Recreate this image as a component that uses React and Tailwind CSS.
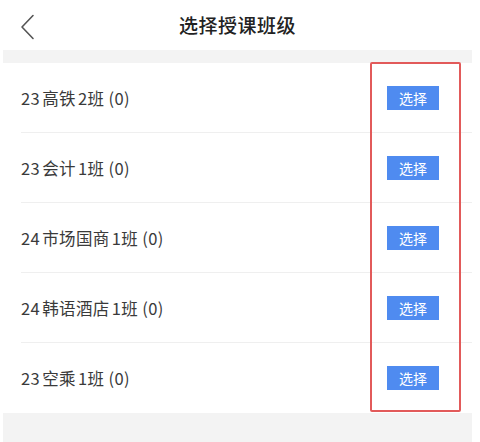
const classes = [
  { grade: '23', name: '高铁', no: '2' },
  { grade: '23', name: '会计', no: '1' },
  { grade: '24', name: '市场国商', no: '1' },
  { grade: '24', name: '韩语酒店', no: '1' },
  { grade: '23', name: '空乘', no: '1' },
];

function ClassRow({ item, last }) {
  return (
    <div className="relative flex h-[70px] items-center justify-between pl-[18px] pr-[33px]">
      <span className="text-[16.5px] text-[#3a3a3a] tracking-[0.4px]">
        {item.grade}
        <span className="ml-[2px]">{item.name}</span>
        <span className="ml-[2px]">{item.no}</span>班 (0)
      </span>
      <button
        type="button"
        className="flex h-[24px] w-[52px] items-center justify-center bg-[#4f8bf0] text-[14px] text-white"
      >
        选择
      </button>
      {!last && <div className="absolute bottom-0 left-[18px] right-0 h-px bg-[#efefef]" />}
    </div>
  );
}

export default function App() {
  return (
    <div
      className="h-[442px] w-[480px] overflow-hidden bg-white"
      style={{ fontFamily: '"Noto Sans CJK SC", "Noto Sans", sans-serif' }}
    >
      <div className="ml-[3px] w-[469px] relative">
        <header className="relative flex h-[50px] items-center justify-center">
          <svg
            className="absolute left-[16px] top-[14px]"
            width="18"
            height="26"
            viewBox="0 0 18 26"
            fill="none"
            stroke="#555"
            strokeWidth="1.6"
            strokeLinecap="round"
            strokeLinejoin="round"
          >
            <path d="M14 1.5 L3 13 L14 24.5" />
          </svg>
          <h1 className="text-[19px] font-medium text-[#222] tracking-[0.5px]">选择授课班级</h1>
        </header>
        <div className="h-[13px] bg-[#f3f3f3]" />
        <div>
          {classes.map((c, i) => (
            <ClassRow key={i} item={c} last={i === classes.length - 1} />
          ))}
        </div>
        <div className="h-[40px] bg-[#f3f3f3]" />
        <div className="pointer-events-none absolute left-[367px] top-[62px] h-[350px] w-[91px] rounded-[2px] border-2 border-[#e25a5a]" />
      </div>
    </div>
  );
}
